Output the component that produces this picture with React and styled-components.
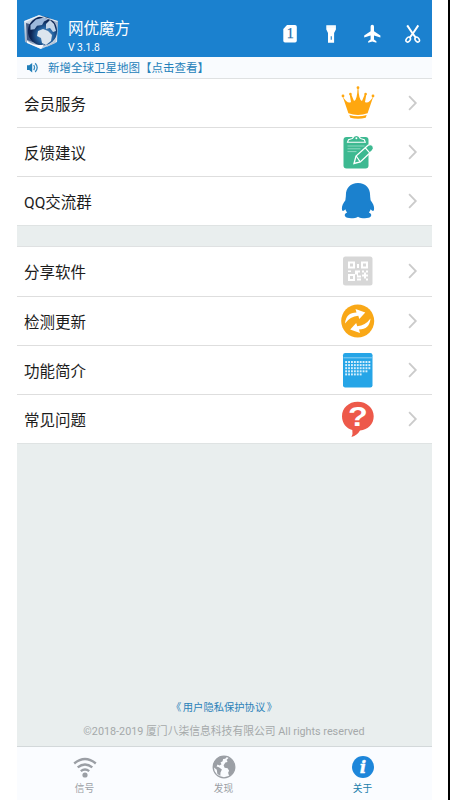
import React, { useState } from "react";
import styled, { createGlobalStyle } from "styled-components";

const GlobalStyle = createGlobalStyle`
	* { box-sizing: border-box; }
	body {
		margin: 0;
		background: #fff;
		font-family: Roboto, "Noto Sans CJK SC", sans-serif;
	}
	svg { display: block; flex: none; }
`;

const Page = styled.div`
	display: flex;
	width: 450px;
	height: 800px;
	padding: 0 16px 0 17px;
	border-right: 2px solid #000;
	overflow: hidden;
`;

const Screen = styled.div`
	display: flex;
	flex-direction: column;
	width: 415px;
	height: 800px;
	background: #e9eeee;
`;

const Header = styled.header`
	display: flex;
	align-items: flex-start;
	height: 57px;
	flex: none;
	padding: 14px 9px 0 6px;
	background: #1b81cf;
	color: #fff;
`;

const Brand = styled.div`
	flex: 1;
	padding-left: 8px;
`;

const Title = styled.div`
	margin-top: 4px;
	font-size: 15.5px;
	line-height: 22px;
	white-space: nowrap;
`;

const Version = styled.div`
	font-size: 10.3px;
	line-height: 15px;
`;

const Tools = styled.div`
	display: grid;
	grid-template-columns: repeat(4, 20px);
	column-gap: 21px;
	padding-top: 10px;
`;

const Notice = styled.div`
	display: flex;
	align-items: center;
	height: 21px;
	flex: none;
	padding-left: 9px;
	gap: 9px;
	background: #f9fbfe;
	color: #2581ba;
	font-size: 11.5px;
	line-height: 20px;
	white-space: nowrap;
`;

const Group = styled.div`
	flex: none;
	margin-bottom: 20px;
	border-top: 1px solid #dfe1e2;
	border-bottom: 1px solid #dfe3e3;
	background: #fff;
`;

const Row = styled.div`
	display: flex;
	align-items: center;
	height: ${({ $height }) => $height || 49}px;
	padding: 0 13px 1px 7px;
	color: #1c1c1c;
	font-size: 15.5px;
	white-space: nowrap;

	& + & {
		border-top: 1px solid #dedede;
		padding-bottom: 0;
	}
	span { flex: 1; }
	svg:last-child { margin-left: 31px; }
`;

const Legal = styled.div`
	margin-top: auto;
	padding: 0 1px 6px 0;
	text-align: center;
	white-space: nowrap;
`;

const Agreement = styled.div`
	color: #2b82b9;
	font-size: 10.3px;
	line-height: 16px;
	word-spacing: -1px;
	margin-bottom: 8px;
`;

const Copyright = styled.div`
	color: #a5a9aa;
	font-size: 10.8px;
	line-height: 16px;
`;

const TabBar = styled.nav`
	display: grid;
	grid-template-columns: 135px 143px 135px;
	height: 54px;
	flex: none;
	border-top: 1px solid #d3d8da;
	background: #fafcff;
`;

const Tab = styled.div`
	display: flex;
	flex-direction: column;
	align-items: center;
	padding-top: 8px;
	font-size: 9.7px;
	line-height: 16px;
	gap: 2px;
	color: ${({ $active }) => ($active ? "#217eac" : "#9b9fa5")};
`;

const Logo = () => (
	<svg width="37" height="37" viewBox="0 0 37 37">
		<defs>
			<radialGradient id="ocean" cx=".6" cy=".65">
				<stop offset="0" stopColor="#7ba6cf" />
				<stop offset=".55" stopColor="#2362a0" />
				<stop offset="1" stopColor="#0d2452" />
			</radialGradient>
			<linearGradient id="cube" x2="1" y2="1">
				<stop offset="0" stopColor="#e8f1fa" />
				<stop offset=".5" stopColor="#8fa4c0" />
				<stop offset="1" stopColor="#fff" />
			</linearGradient>
		</defs>
		<path d="M1 7 16 1l19 6-1 21-16 7L2 28Z" fill="url(#cube)" />
		<path d="m3 9 7 2 3 18-9-3Z" fill="#27406f" opacity=".8" />
		<circle cx="19.5" cy="17" r="14.6" fill="url(#ocean)" />
		<path d="M7.5 11 13 5.5l8-2 4 2-4 2-2 3.5-5 .7-2.5 3.5-4 .6Z" fill="#9db9dc" />
		<path d="m15 17 5-2 5 2 4 4-1 6-5 4-4-2-1-5-4-2Z" fill="#dce5ee" />
		<path d="m23 10 4-4 4 4 2 7-3 1-3-4-4 1Z" fill="#c3d5e8" />
		<path d="M4 26.5q7 6 17 4l-3 4.5-14-6Z" fill="#f9fbff" />
		<path d="M24 31q6-1 9-7l-.5 5-9 4Z" fill="#b5c6da" />
		<path d="M2 7.5 16 1.8 34.5 7.5" stroke="#f5faff" strokeWidth="1.2" fill="none" opacity=".85" />
	</svg>
);

const SimIcon = () => (
	<svg width="20" height="20">
		<path d="M7 1h8q1.8 0 1.8 1.8v14q0 1.7-1.8 1.7H5q-1.7 0-1.7-1.7V5Z" fill="#fff" />
		<text x="10.2" y="14.4" textAnchor="middle" fontFamily="Liberation Serif" fontSize="14" fill="#1b6ca9" stroke="#1b6ca9" strokeWidth=".25">1</text>
	</svg>
);

const TorchIcon = () => (
	<svg width="20" height="20">
		<path fill="#fff" fillRule="evenodd" d="M5.3 1.3h9.6v4.1L13.1 9v9.8H7V9L5.3 5.4Zm4.4 10.9v3.6h1.1v-3.6Z" />
		<path d="M5.4 3h9.4" stroke="#cde3f5" strokeWidth=".4" />
	</svg>
);

const PlaneIcon = () => (
	<svg width="20" height="20">
		<path fill="#fff" d="M10.3.8c1.1 0 1.7.9 1.7 2v4.4l6.4 4.2v2L12 11.5v3.9l2.4 1.8v1.6l-4.1-1.2-4.1 1.2v-1.6l2.4-1.8v-3.9l-6.4 1.9v-2l6.4-4.2V2.8c0-1.1.6-2 1.7-2Z" />
	</svg>
);

const ScissorsIcon = () => (
	<svg width="20" height="20" fill="none" stroke="#fff">
		<path d="M4.2 1.4 9.3 9l3.8 5.1M15.3 1.4 10.2 9l-3.8 5.1" strokeWidth="2" />
		<ellipse cx="5.2" cy="15.6" rx="1.9" ry="2.7" strokeWidth="1.5" transform="rotate(38 5.2 15.6)" />
		<ellipse cx="14.2" cy="15.6" rx="1.9" ry="2.7" strokeWidth="1.5" transform="rotate(-38 14.2 15.6)" />
	</svg>
);

const SpeakerIcon = () => (
	<svg width="13" height="12">
		<path d="M1 3.3h2.2L6.2.9v9.5L3.2 8H1Z" fill="#207eb9" />
		<path d="M7.7 3q1.7 2.6 0 5.2M9.2 1.2q4 4.4 0 8.8" fill="none" stroke="#3a8cc0" strokeWidth="1.3" />
	</svg>
);

const Chevron = () => (
	<svg width="12" height="18">
		<path d="m2.1 2.1 6.7 6.9-6.7 6.9" fill="none" stroke="#cbcbcb" strokeWidth="1.8" />
	</svg>
);

const Crown = () => (
	<svg width="36" height="36" fill="#ffa70f">
		<path d="M2.6 11.3Q7.5 19.5 11 17L9.6 9.1h1.5l2.9 7Q17.2 15 17.6 3.2h.8Q18.8 15 22 16.1l2.9-7h1.5L25 17q3.5 2.5 8.4-5.7l-5.8 17q-9.6 3.5-19.2 0Z" />
		<circle cx="18" cy="2.7" r="1.4" />
		<circle cx="10.4" cy="9" r="1.3" />
		<circle cx="25.6" cy="9" r="1.3" />
		<circle cx="3" cy="11" r="1.4" />
		<circle cx="33" cy="11" r="1.4" />
		<path d="M9.3 30q8.7 2.4 17.4 0l-1 2.8q-7.7 1.8-15.4 0Z" />
	</svg>
);

const Feedback = () => (
	<svg width="36" height="36">
		<rect x="3.500" y="3" width="25" height="31.500" rx="3" fill="#3db991" />
		<path d="M7.5 8.3h17.8l-1-2.600-4.100-1.300q-.8-3-3.800-3t-3.800 3L8.500 5.700Z" fill="#3db991" stroke="#fff" strokeWidth="1.1" />
		<circle cx="16.4" cy="4.2" r="1" fill="#fff" />
		<path d="M7.5 12h17M7.5 14.800h13M7.5 17.600h9" stroke="#a2dfcd" strokeWidth=".8" />
		<path d="m14 29.5 2-7.5L28 11.3q3-1.8 5 .8 1.5 2.4-.8 4.7L20.3 28Z" fill="#3db991" stroke="#fff" strokeWidth="1.3" />
		<path d="m16.2 22 4 5.8M25.3 13.9l4.4 5" fill="none" stroke="#fff" strokeWidth="1.2" />
	</svg>
);

const Penguin = () => (
	<svg width="36" height="38">
		<path fill="#1b81ce" d="M18 1C10.3 1 5.9 6.3 5.9 13c0 2-.3 3-.5 5.2C3.2 21 1.7 24 1.9 27.1c.2 2.8 1.8 2 3.4.2.4 1.2 1 2.3 1.8 3.2-2.2.8-2.9 2.3-2 3.8 1.5 2.7 10 2.4 12.9.4 2.9 2 11.4 2.3 12.9-.4.9-1.5.2-3-2-3.8.8-.9 1.4-2 1.8-3.2 1.6 1.8 3.2 2.6 3.4-.2.2-3.1-1.3-6.1-3.5-8.9-.2-2.2-.5-3.2-.5-5.2C30.1 6.3 25.7 1 18 1Z" />
	</svg>
);

const QrCode = () => (
	<svg width="36" height="36">
		<rect x="3" y="3.5" width="29.5" height="29" rx="2.5" fill="#d7d7d7" />
		<g fill="none" stroke="#fff" strokeWidth="2">
			<rect x="9" y="9.5" width="5" height="5" />
			<rect x="22" y="9.5" width="5" height="5" />
			<rect x="9" y="22" width="5" height="5" />
		</g>
		<path fill="#fff" d="M17 11h2v4h-2zm-9 6.5h3V19H8zm7 0h5v2h-2v3h3v2h-4v-3h-2zm7 0h2v2h-2zm4 0h2v2h-2zm-2 2h2v2h2v2h-2v2h2v2h-2v-2h-2v-2h-2v-2h2zm-7 6h4v2h-4z" />
	</svg>
);

const Refresh = () => (
	<svg width="36" height="36">
		<circle cx="17.7" cy="18" r="16.5" fill="#f9a817" />
		<path d="M5 20.5Q6 9.5 16.5 9.5l-1-3.5 9.8 3.6-6 6.4-1-3.2Q10 13.5 5 20.5Z" fill="#fff" />
		<path d="M30.5 15.5Q29.5 26.5 19 26.5l1 3.5-9.8-3.6 6-6.4 1 3.2q8.3-.7 13.3-7.7Z" fill="#fff" />
	</svg>
);

const dots = [9, 9, 9, 8, 6].flatMap((count, row) =>
	Array.from({ length: count }, (_, col) => ({ col, row }))
);

const Features = () => (
	<svg width="36" height="38">
		<rect x="3" y="2" width="29.5" height="34.5" rx="2.2" fill="#26a5e7" />
		<path d="M3.5 6.8h28.4" stroke="#8fd0f3" strokeWidth="1" />
		{dots.map(({ col, row }) => (
			<rect key={`${row}-${col}`} x={5.2 + col * 2.9} y={10 + row * 3.1} width="1.9" height="2" fill="#d6effc" />
		))}
	</svg>
);

const Question = () => (
	<svg width="36" height="38">
		<path d="M17.7 1.7C8.7 1.7 2 8 2 16.2c0 7 4.3 12.1 10.3 13.8q.8 3.8-.8 7.1 5.8-1.8 8.5-6.6c8-1 13.7-6.4 13.7-14.3C33.7 8 26.700 1.7 17.7 1.7Z" fill="#ed594a" />
		<text transform="translate(17.8 26) scale(1.2 1)" textAnchor="middle" fontFamily="Liberation Sans" fontWeight="bold" fontSize="27" fill="#fff">?</text>
	</svg>
);

const WifiIcon = () => (
	<svg width="24" height="24" fill="none" stroke="#9b9fa5" strokeWidth="2.4">
		<path d="M1.2 8.5q10.8-9 21.6 0M4.7 12.4q7.3-6 14.6 0M7.8 16.1q4.2-3.3 8.4 0" />
		<circle cx="12" cy="20" r="2.6" fill="#9b9fa5" stroke="none" />
	</svg>
);

const GlobeIcon = () => (
	<svg width="24" height="24">
		<circle cx="12" cy="12" r="10.8" fill="#fafcff" stroke="#9b9fa5" strokeWidth="1.3" />
		<path fill="#9b9fa5" d="m10 1 5 .5-1.7 2.2-2.2.2-.5 2.3-2.1 1.4 1 1.6-2 1.2-2-.9-.9 2 2.3.8 3 2.1-1.4 3-.2 3.6-3-2.2-.5-4L1.3 12 2 7l3-3.8ZM14.5 5l2.3-2.3 3.5 2.2 2.1 4.5.2 5.5-2.5 4-3 2-1-3.1 1-2-1.5-2.6-3-.4-1-2.6 1.8-2.7 2-.4-.2-1.3Z" />
	</svg>
);

const InfoIcon = () => (
	<svg width="24" height="24">
		<circle cx="12" cy="12" r="11" fill="#1d86da" />
		<text x="12" y="18.2" textAnchor="middle" fontFamily="DejaVu Serif" fontStyle="italic" fontWeight="bold" fontSize="17" fill="#fff" stroke="#fff" strokeWidth=".4">i</text>
	</svg>
);

const services = [
	{ name: "会员服务", Icon: Crown, height: 48 },
	{ name: "反馈建议", Icon: Feedback },
	{ name: "QQ交流群", Icon: Penguin },
];

const others = [
	{ name: "分享软件", Icon: QrCode },
	{ name: "检测更新", Icon: Refresh },
	{ name: "功能简介", Icon: Features },
	{ name: "常见问题", Icon: Question },
];

const tabs = [
	{ name: "信号", Icon: WifiIcon },
	{ name: "发现", Icon: GlobeIcon },
	{ name: "关于", Icon: InfoIcon },
];

const Menu = ({ items }) => (
	<Group>
		{items.map(({ name, Icon, height }) => (
			<Row key={name} $height={height}>
				<span>{name}</span>
				<Icon />
				<Chevron />
			</Row>
		))}
	</Group>
);

export default function App() {
	const [active, setActive] = useState("关于");

	return (
		<Page>
			<GlobalStyle />
			<Screen>
				<Header>
					<Logo />
					<Brand>
						<Title>网优魔方</Title>
						<Version>V 3.1.8</Version>
					</Brand>
					<Tools>
						<SimIcon />
						<TorchIcon />
						<PlaneIcon />
						<ScissorsIcon />
					</Tools>
				</Header>
				<Notice>
					<SpeakerIcon />
					新增全球卫星地图【点击查看】
				</Notice>
				<Menu items={services} />
				<Menu items={others} />
				<Legal>
					<Agreement>《 用户隐私保护协议 》</Agreement>
					<Copyright>©2018-2019 厦门八柒信息科技有限公司 All rights reserved</Copyright>
				</Legal>
				<TabBar>
					{tabs.map(({ name, Icon }) => (
						<Tab key={name} $active={name === active} onClick={() => setActive(name)}>
							<Icon />
							{name}
						</Tab>
					))}
				</TabBar>
			</Screen>
		</Page>
	);
}
